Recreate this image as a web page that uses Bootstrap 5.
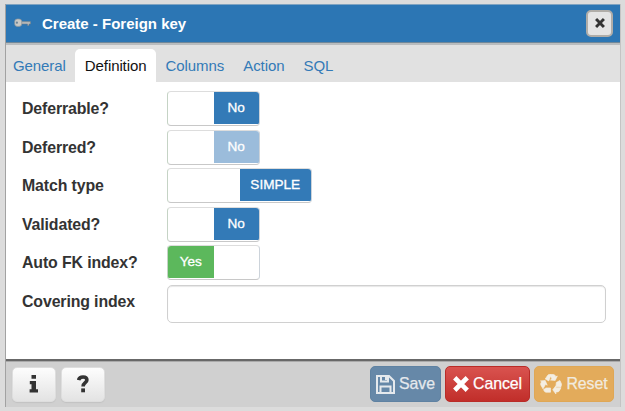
<!DOCTYPE html>
<html lang="en">
<head>
<meta charset="utf-8">
<meta name="viewport" content="width=device-width, initial-scale=1">
<title>Create - Foreign key</title>
<link href="https://cdn.jsdelivr.net/npm/bootstrap@5.3.0/dist/css/bootstrap.min.css" rel="stylesheet">
<style>
body{background:#dcdcdc;font-family:"Liberation Sans",Arial,sans-serif;font-size:15px;line-height:20px;height:411px;overflow:hidden;padding:4px 4px 4px 5px}
.dialog{height:403px;background:#fff;border-left:1px solid #a2a2a2;border-right:1px solid #c4c4c4}
.dialog-head{height:39px;background:#2c76b4;border-top:1px solid #7fa3c1;border-bottom:1px solid #6f8799;padding:0 7px 0 8px;color:#fff;font-weight:700}
.dialog-head .key-icon{margin:0 11px 2px 0}
.dialog-close{width:27px;height:27px;border:2px solid #b0ada8;border-radius:5px;background:#e4e4e4;padding:0 0 2px}
.tab-strip{height:39px;background:#e1e1e1;border-top:2px solid #b9bcbe;padding-top:4px;letter-spacing:-.1px}
.tab-strip .nav-link{height:33px;line-height:20px;padding:7px 9.6px 6px;border:0;border-radius:5px 5px 0 0;color:#337ab7}
.tab-strip .nav-link:first-child{padding-left:7px}
.tab-strip .nav-link.active{background:#fff;color:#111}
.form-area{padding:9px 14px 0 16px;height:277px}
.field{height:38.5px}
.field-label{width:145px;font-size:15.9px;letter-spacing:-.13px;font-weight:700;color:#333;padding-top:8px;flex:none}
.toggle{width:93px;height:35px;border:1px solid #ccc;border-color:#ddd #ccd3da #c8c8c8 #c5d3c5;border-radius:4px;overflow:hidden;font-size:13.6px;color:#fff;line-height:31px;text-align:center;-webkit-text-stroke:.3px}
.toggle.wide{width:145px}
.toggle>span{flex:1;height:32px}
.toggle .sw-no{background:#337ab7}
.toggle .sw-yes{background:#5cb85c}
.toggle .sw-off{background:#9bbcdb}
.field .form-control{height:38px;margin-top:1px;border:1px solid #d0d0d0;border-radius:5px;box-shadow:inset 0 1px 1px #e7e7e7}
.dialog-foot{height:48px;background:#d0d0d0;border-top:2px solid #686868;padding:0 6px 0;box-shadow:inset 0 1px #aaa}
.dialog-foot .btn{height:36px;border-radius:5px;padding:0;font-size:15.9px;letter-spacing:-.1px;line-height:20px;-webkit-text-stroke:.25px}
.dialog-foot .btn-help{height:35px;width:44px;background:linear-gradient(#fdfdfd,#e3e3e3);border:1px solid #dedede;box-shadow:0 1px 1px #c2c2c2}
.help-group{gap:5px}
.btn-keep{width:71px;background:#6688a8;border:1px solid #5f82a2;color:#e5e9ed}
.btn-stop{width:85px;background:linear-gradient(#d9534f,#c12e2a);border:1px solid #b92c28;color:#fff}
.btn-redo{width:80px;background:#e3ab5b;border:1px solid #dfa755;color:#f1eadf}
svg{display:block;flex:none}
</style>
</head>
<body>
<main class="dialog d-flex flex-column">
  <header class="dialog-head d-flex align-items-center">
    <svg class="key-icon" width="17" height="10" viewBox="0 0 17 10"><path d="M7 3.6H16.5V6H15V7.4H13.5V6H7Z" fill="#b5b8ba" stroke="#777e83" stroke-width=".5"/><rect x=".7" y="1" width="7" height="7.4" rx="2.6" fill="#c9c9c6" stroke="#8d959b" stroke-width=".7"/><circle cx="2.9" cy="4.7" r="1.1" fill="#6f8597"/></svg>
    <span class="flex-grow-1">Create - Foreign key</span>
    <button class="btn dialog-close d-flex align-items-center justify-content-center" type="button" aria-label="Close"><svg width="10" height="10" viewBox="0 0 11 11"><path d="M2.3 2.3 8.7 8.7M8.7 2.3 2.3 8.7" stroke="#333" stroke-width="3.2" stroke-linecap="square"/></svg></button>
  </header>
  <nav class="nav tab-strip flex-nowrap">
    <a class="nav-link" href="#">General</a>
    <a class="nav-link active" href="#">Definition</a>
    <a class="nav-link" href="#">Columns</a>
    <a class="nav-link" href="#">Action</a>
    <a class="nav-link" href="#">SQL</a>
  </nav>
  <section class="form-area">
    <div class="field d-flex"><div class="field-label">Deferrable?</div><div class="toggle d-flex"><span></span><span class="sw-no">No</span></div></div>
    <div class="field d-flex"><div class="field-label">Deferred?</div><div class="toggle d-flex"><span></span><span class="sw-off">No</span></div></div>
    <div class="field d-flex"><div class="field-label">Match type</div><div class="toggle wide d-flex"><span></span><span class="sw-no">SIMPLE</span></div></div>
    <div class="field d-flex"><div class="field-label">Validated?</div><div class="toggle d-flex"><span></span><span class="sw-no">No</span></div></div>
    <div class="field d-flex"><div class="field-label">Auto FK index?</div><div class="toggle d-flex"><span class="sw-yes">Yes</span><span></span></div></div>
    <div class="field d-flex"><label class="field-label" for="covering">Covering index</label><input class="form-control" id="covering" type="text"></div>
  </section>
  <footer class="dialog-foot d-flex align-items-center justify-content-between">
    <div class="d-flex help-group">
      <button class="btn btn-help d-flex align-items-center justify-content-center" type="button" aria-label="Info"><svg width="10" height="18" viewBox="0 0 10 18"><path d="M2.5 0H7V3.8H2.5ZM.8 6H7V14.2H9V17.5H.6V14.2H2.5V9.2H.8Z" fill="#333"/></svg></button>
      <button class="btn btn-help d-flex align-items-center justify-content-center" type="button" aria-label="Help"><svg width="12" height="18" viewBox="0 0 12 18"><path d="M1.6 5.1C2 3 3.5 2 6 2 8.6 2 9.9 3.2 9.9 5 9.9 7.8 6.1 7.6 6.1 11.4" fill="none" stroke="#333" stroke-width="3.6"/><path d="M4.2 13.4H8V17.3H4.2Z" fill="#333"/></svg></button>
    </div>
    <div class="d-flex gap-1">
      <button class="btn btn-keep d-flex align-items-center justify-content-center gap-1" type="button"><svg width="19" height="19" viewBox="0 0 19 19" fill="none" stroke="#e5e9ed" stroke-width="2"><path d="M1 1H13L18 6V18H1Z"/><path d="M5 1V6.5H12V1M4.5 18V11.5H14.5V18"/><path d="M10 2V5"/></svg>Save</button>
      <button class="btn btn-stop d-flex align-items-center justify-content-center gap-1" type="button"><svg width="16" height="16" viewBox="0 0 16 16"><path d="M3.4 3.4 12.6 12.6M12.6 3.4 3.4 12.6" stroke="#fff" stroke-width="4.7" stroke-linecap="square"/></svg>Cancel</button>
      <button class="btn btn-redo d-flex align-items-center justify-content-center gap-1" type="button"><svg width="22" height="21" viewBox="0 0 22 21" fill="#f4eee3" stroke="#f4eee3" stroke-width=".7" stroke-linejoin="round"><path d="M5.3 5 7.6 1.4Q8.2.5 9.3.5L10.9 1 8.8 6.9ZM9.8.5H13.4Q14.5.5 15.1 1.5L15.9 2.7 17.3 2 15.2 6.4 10.5 6 12 5.1Z"/><path d="M16.3 8.5 19.9 6.5 21.4 9.7Q21.7 10.7 21.3 11.7L20.8 12.9 16 12.4ZM21 13.7 19.2 17Q18.7 17.9 17.5 17.9H15.9V19.9L12.8 15.8 15.9 11.8V13.7Z"/><path d="M10.5 14V18.2H6Q4.8 18.1 4.2 17L3.6 15.6 6 14ZM3 14.8.9 11.2Q.4 10.1.9 9L1.6 7.8.5 6.9 5.2 6.6 7.2 11.2 5.6 10.2Z"/></svg>Reset</button>
    </div>
  </footer>
</main>
<script src="https://cdn.jsdelivr.net/npm/bootstrap@5.3.0/dist/js/bootstrap.bundle.min.js"></script>
</body>
</html>
